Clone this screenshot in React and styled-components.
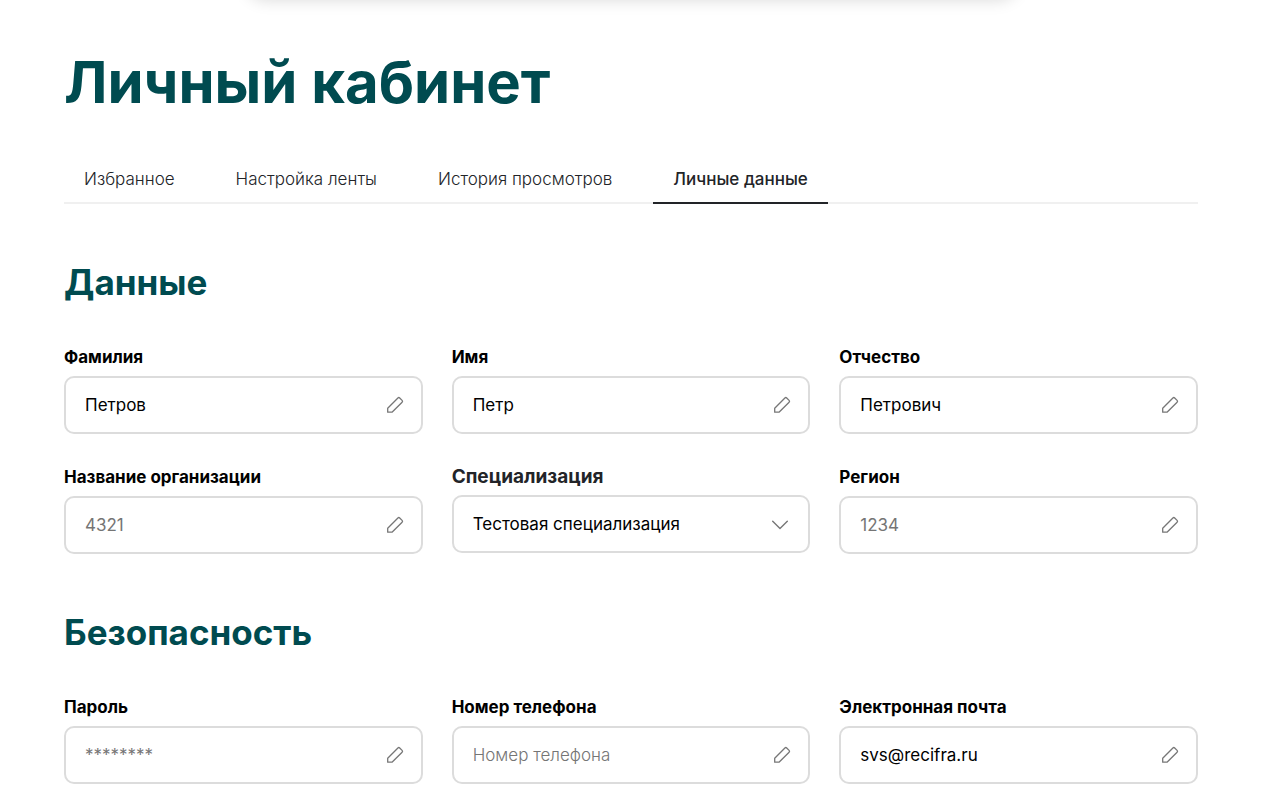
import React, { useState } from "react";
import styled, { createGlobalStyle } from "styled-components";

const GlobalStyle = createGlobalStyle`
  * {
    box-sizing: border-box;
  }

  body {
    margin: 0;
    background: #ffffff;
    color: #222428;
    font-family: Inter, "Liberation Sans", sans-serif;
  }
`;

const Header = styled.header`
  display: flex;
  justify-content: center;
  height: 20px;
  margin-top: -20px;
  padding-right: 16px;
`;

const HeaderPanel = styled.div`
  width: 61%;
  border-radius: 0 0 20px 20px;
  box-shadow: 0 0 16px rgba(0, 0, 0, 0.15);
`;

const Page = styled.main`
  padding: 47px 82px 10px 64px;
`;

const Title = styled.h1`
  margin: 0 0 39px;
  color: #004b50;
  font-size: 58px;
  line-height: 70px;
  font-weight: 700;
`;

const Tabs = styled.nav`
  display: flex;
  gap: 21px;
  border-bottom: 2px solid #f0f0f0;
`;

const Tab = styled.a`
  padding: 9px 20px;
  margin-bottom: -2px;
  border-bottom: 2px solid
    ${(props) => (props.$active ? "#222428" : "transparent")};
  color: #222428;
  font-size: 17px;
  line-height: 28px;
  font-weight: ${(props) => (props.$active ? 500 : 300)};
  text-decoration: none;
`;

const Section = styled.section`
  padding-top: 55px;
`;

const SectionTitle = styled.h2`
  margin: 0 0 38px;
  color: #004b50;
  font-size: 35px;
  line-height: 46px;
  font-weight: 700;
`;

const Fields = styled.div`
  display: grid;
  grid-template-columns: repeat(3, 1fr);
  gap: 29px;
`;

const Field = styled.div`
  display: flex;
  flex-direction: column;
`;

const Label = styled.label`
  margin-bottom: 5px;
  color: #000000;
  font-size: 17px;
  line-height: 28px;
  font-weight: 700;
`;

const SelectLabel = styled(Label)`
  margin-bottom: 4px;
  color: #222428;
  font-size: 19px;
`;

const Control = styled.div`
  display: flex;
  align-items: center;
  height: 58px;
  padding: 0 17px 0 19px;
  border: 2px solid #dcdcdc;
  border-radius: 10px;
`;

const Input = styled.input`
  flex: 1;
  min-width: 0;
  padding: 0;
  border: 0;
  outline: 0;
  background: transparent;
  color: #000000;
  font-family: inherit;
  font-size: 17px;
  font-weight: 400;

  &::placeholder {
    color: #757575;
    font-weight: ${(props) => (props.$light ? 300 : 400)};
    opacity: 1;
  }
`;

const SelectWrap = styled.div`
  display: grid;
  align-items: center;

  & > * {
    grid-area: 1 / 1;
  }

  & > svg {
    justify-self: end;
    margin: 2px 22px 0 0;
    pointer-events: none;
  }
`;

const Select = styled.select`
  width: 100%;
  height: 58px;
  padding: 0 48px 0 19px;
  border: 2px solid #dcdcdc;
  border-radius: 10px;
  appearance: none;
  background: transparent;
  color: #000000;
  font-family: inherit;
  font-size: 17px;
  font-weight: 400;
`;

const IconButton = styled.button`
  display: flex;
  padding: 0;
  border: 0;
  background: none;
  color: #777777;
  cursor: pointer;
`;

const PencilIcon = () => (
  <svg width="18" height="18" viewBox="0 0 18 18" fill="none" aria-hidden="true">
    <path
      d="M1.7 16.2V12.2L11.9 2Q12.8 1.1 13.7 2L16.1 4.4Q17 5.3 16.1 6.2L6 16.2Z"
      stroke="currentColor"
      strokeWidth="1.3"
      strokeLinejoin="round"
    />
  </svg>
);

const ChevronIcon = () => (
  <svg width="16" height="10" viewBox="0 0 16 10" fill="none" aria-hidden="true">
    <path
      d="M0.7 1.2 8 8.5 15.3 1.2"
      stroke="#777777"
      strokeWidth="1.4"
      strokeLinecap="round"
      strokeLinejoin="round"
    />
  </svg>
);

const tabs = [
  { id: "favorites", title: "Избранное" },
  { id: "feed", title: "Настройка ленты" },
  { id: "history", title: "История просмотров" },
  { id: "personal", title: "Личные данные" },
];

const TextField = ({ id, label, initial = "", ...rest }) => {
  const [value, setValue] = useState(initial);

  return (
    <Field>
      <Label htmlFor={id}>{label}</Label>
      <Control>
        <Input
          id={id}
          value={value}
          onChange={(e) => setValue(e.target.value)}
          {...rest}
        />
        <IconButton
          type="button"
          aria-label={label}
          onClick={() => document.getElementById(id).focus()}
        >
          <PencilIcon />
        </IconButton>
      </Control>
    </Field>
  );
};

const App = () => {
  const [activeTab, setActiveTab] = useState("personal");

  return (
    <>
      <GlobalStyle />
      <Header>
        <HeaderPanel />
      </Header>
      <Page>
        <Title>Личный кабинет</Title>
        <Tabs>
          {tabs.map((tab) => (
            <Tab
              key={tab.id}
              href={`#${tab.id}`}
              $active={tab.id === activeTab}
              onClick={() => setActiveTab(tab.id)}
            >
              {tab.title}
            </Tab>
          ))}
        </Tabs>

        <Section>
          <SectionTitle>Данные</SectionTitle>
          <Fields>
            <TextField id="surname" label="Фамилия" initial="Петров" />
            <TextField id="name" label="Имя" initial="Петр" />
            <TextField id="patronymic" label="Отчество" initial="Петрович" />
            <TextField
              id="organization"
              label="Название организации"
              placeholder="4321"
            />
            <Field>
              <SelectLabel htmlFor="specialization">Специализация</SelectLabel>
              <SelectWrap>
                <Select id="specialization">
                  <option>Тестовая специализация</option>
                </Select>
                <ChevronIcon />
              </SelectWrap>
            </Field>
            <TextField id="region" label="Регион" placeholder="1234" />
          </Fields>
        </Section>

        <Section>
          <SectionTitle>Безопасность</SectionTitle>
          <Fields>
            <TextField id="password" label="Пароль" placeholder="********" />
            <TextField
              id="phone"
              label="Номер телефона"
              placeholder="Номер телефона"
              $light
            />
            <TextField
              id="email"
              label="Электронная почта"
              initial="svs@recifra.ru"
            />
          </Fields>
        </Section>
      </Page>
    </>
  );
};

export default App;
